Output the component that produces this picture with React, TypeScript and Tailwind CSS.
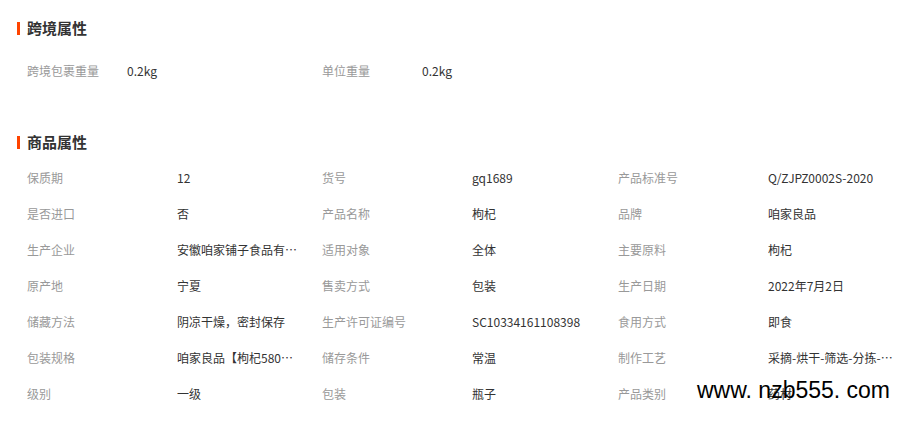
const CROSS = [
    { label: '跨境包裹重量', value: '0.2kg' },
    { label: '单位重量', value: '0.2kg' },
];

const ATTRS = [
    { label: '保质期', value: '12' },
    { label: '货号', value: 'gq1689' },
    { label: '产品标准号', value: 'Q/ZJPZ0002S-2020' },
    { label: '是否进口', value: '否' },
    { label: '产品名称', value: '枸杞' },
    { label: '品牌', value: '咱家良品' },
    { label: '生产企业', value: '安徽咱家铺子食品有限公司' },
    { label: '适用对象', value: '全体' },
    { label: '主要原料', value: '枸杞' },
    { label: '原产地', value: '宁夏' },
    { label: '售卖方式', value: '包装' },
    { label: '生产日期', value: '2022年7月2日' },
    { label: '储藏方法', value: '阴凉干燥，密封保存' },
    { label: '生产许可证编号', value: 'SC10334161108398' },
    { label: '食用方式', value: '即食' },
    { label: '包装规格', value: '咱家良品【枸杞580粒】' },
    { label: '储存条件', value: '常温' },
    { label: '制作工艺', value: '采摘-烘干-筛选-分拣-包装' },
    { label: '级别', value: '一级' },
    { label: '包装', value: '瓶子' },
    { label: '产品类别', value: '药材' },
];

function Title({ text }: { text: string }) {
    return (
        <div className="flex items-center h-[20px]">
            <span className="w-[3px] h-[13px] bg-[#ff4400] mr-[7px]" />
            <span className="text-[15px] font-bold text-[#333]">{text}</span>
        </div>
    );
}

export default function App() {
    return (
        <div
            className="relative w-[902px] h-[426px] bg-white pl-[17px] pt-[18px] overflow-hidden"
            style={{ fontFamily: '"Noto Sans CJK SC", "Noto Sans", sans-serif' }}
        >
            {/* 跨境属性 */}
            <Title text="跨境属性" />
            <div className="flex mt-[15px] pl-[10px]">
                {CROSS.map(a => (
                    <div key={a.label} className="flex items-center h-[36px] w-[295px] text-[12px]">
                        <span className="w-[100px] text-[#999]">{a.label}</span>
                        <span className="text-[#333]">{a.value}</span>
                    </div>
                ))}
            </div>

            {/* 商品属性 */}
            <div className="mt-[43px]">
                <Title text="商品属性" />
            </div>
            <div className="grid grid-cols-[295px_296px_296px] mt-[8px] pl-[10px]">
                {ATTRS.map(a => (
                    <div key={a.label} className="flex items-center h-[36px] text-[12px] min-w-0">
                        <span className="w-[150px] shrink-0 text-[#999]">{a.label}</span>
                        <span className="w-[125px] truncate text-[#333]">{a.value}</span>
                    </div>
                ))}
            </div>

            {/* watermark */}
            <div
                className="absolute left-[697px] top-[376px] text-[23px] leading-[28px] text-black whitespace-nowrap"
                style={{ fontFamily: '"Liberation Sans", Arial, sans-serif' }}
            >
                www. nzb555. com
            </div>
        </div>
    );
}
